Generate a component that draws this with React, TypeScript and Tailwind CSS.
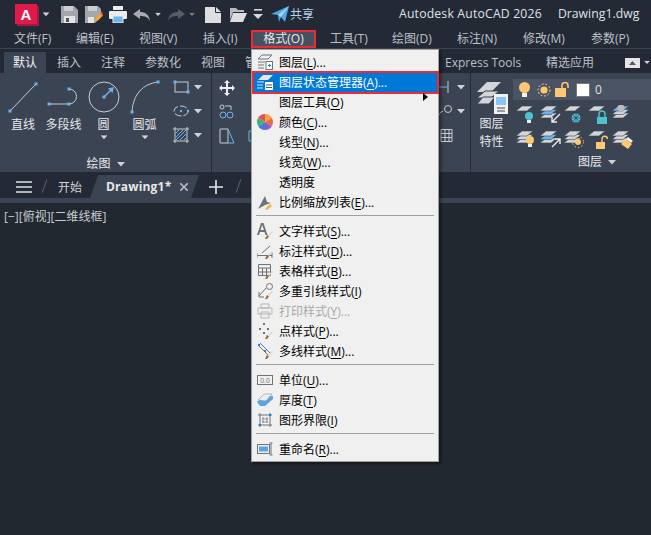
import React from "react";

const B = "#6cb4ee";
const G = "#c9ccd1";
const Y = "#fdc871";
const L = "#d3d5d8";
const FONT = "font-['Open_Sans','Noto_Sans_CJK_SC',sans-serif]";

const Caret = ({ c = "mx-auto" }: { c?: string }) => (
  <svg width="8" height="5" viewBox="0 0 8 5" className={c}><path d="M0 0h8L4 4.5z" fill="#cfd2d6" /></svg>
);

function Ico({ w = 18, h = 18, c = "", children }: { w?: number; h?: number; c?: string; children: React.ReactNode }) {
  return <svg width={w} height={h} viewBox={`0 0 ${w} ${h}`} className={`shrink-0 ${c}`}>{children}</svg>;
}

const Square = ({ x, y, f = B }: { x: number; y: number; f?: string }) => <rect x={x - 1.5} y={y - 1.5} width="3" height="3" fill={f} />;

function QuickBar() {
  return (
    <div className="flex h-[28px] items-center pt-[1px]">
      <div className="ml-[15px] mb-[1px] flex h-[20px] w-[22px] items-center justify-center bg-[#e01b4b] text-[15px] leading-none font-bold text-white shadow-[2px_2px_0_#a11c40] font-['Liberation_Sans',sans-serif]">A</div>
      <Caret c="ml-[5px] scale-90" />
      <Ico w={17} h={17} c="ml-[11px]"><path d="M0 0h13l4 4v13H0z" fill="#a3a6aa" /><rect x="3" y="0" width="9" height="5" fill="#cdced0" /><rect x="3" y="10" width="11" height="7" fill="#e4e4e4" /><rect x="5" y="12" width="3" height="4" fill="#555" /></Ico>
      <Ico w={18} h={17} c="ml-[7px]"><path d="M0 0h13l3 3v8l-6 6H0z" fill="#a3a6aa" /><rect x="3" y="0" width="9" height="5" fill="#cdced0" /><rect x="3" y="11" width="6" height="6" fill="#e4e4e4" /><path d="M9 16l1.5-4 5-5 2.5 2.5-5 5z" fill="#f2a33a" /><path d="M15 7l1.5-1.5L18 8l-1 1.5z" fill="#e84d5c" /></Ico>
      <Ico w={18} h={17} c="ml-[6px]"><rect x="4" y="0" width="10" height="4" fill="#ececec" /><rect x="0" y="5" width="18" height="8" rx="1" fill="#ececec" /><rect x="4" y="10" width="10" height="7" fill={B} stroke="#ececec" /></Ico>
      <Ico w={17} h={12} c="ml-[6px]"><path d="M0 5l7-5v3c5 0 9 2 10 9-2-4-5-5-10-5v3z" fill="#a8aaad" /></Ico>
      <Caret c="ml-[4px] scale-75" />
      <Ico w={17} h={12} c="ml-[6px]"><path d="M17 5l-7-5v3C5 3 1 5 0 12c2-4 5-5 10-5v3z" fill="#565c66" /></Ico>
      <Caret c="ml-[3px] scale-75 opacity-50" />
      <Ico w={16} h={17} c="ml-[9px]"><path d="M0 1h10l6 6v10H0z" fill="#dedede" /><path d="M11 1l5 5h-5z" fill="#dedede" /><path d="M10.5 0v6.5H16" fill="none" stroke="#232a35" /></Ico>
      <Ico w={18} h={15} c="ml-[8px]"><path d="M1 1h6l2 2h6v2H4l-3 8z" fill="#b9babc" /><path d="M4 6h14l-4 9H1z" fill="#dedede" /></Ico>
      <Ico w={10} h={11} c="ml-[6px]"><rect x="1" y="0" width="8" height="1.6" fill="#d7d8da" /><path d="M0 5h10l-5 5z" fill="#d7d8da" /></Ico>
      <Ico w={18} h={17} c="ml-[8px]"><path d="M0 8L18 0l-4 16-4-5-2 5-1-7z" fill="#4fa9e8" /><path d="M7 9l11-9-8 11z" fill="#a8d6f7" /></Ico>
      <span className="ml-[1px] text-[12px] text-[#b4d3ec]">共享</span>
      <span className="ml-[85px] text-[12.2px] tracking-[0.2px] text-[#dfe2e6]">Autodesk AutoCAD 2026</span>
      <span className="ml-[16px] text-[12.2px] tracking-[0.05px] text-[#dfe2e6]">Drawing1.dwg</span>
    </div>
  );
}

function MenuBar() {
  const items: [string, string][] = [
    ["文件(F)", "ml-[14px] w-[62px]"],
    ["编辑(E)", "w-[63px]"],
    ["视图(V)", "w-[64px]"],
    ["插入(I)", "w-[48px]"],
  ];
  const after: [string, string][] = [
    ["工具(T)", "ml-[14px] w-[62px]"],
    ["绘图(D)", "w-[65px]"],
    ["标注(N)", "w-[66px]"],
    ["修改(M)", "w-[68px]"],
    ["参数(P)", "w-[50px]"],
  ];
  return (
    <div className="flex h-[21px] items-center border-b border-[#3b4453] pt-[2px] text-[12px] text-[#bcc1c8]">
      {items.map(([t, c]) => <span key={t} className={c}>{t}</span>)}
      <span className="flex h-[18px] w-[65px] items-center justify-center border-2 border-[#ed2a36] bg-[#47505f] text-[#e6e8ea]">格式(O)</span>
      {after.map(([t, c]) => <span key={t} className={c}>{t}</span>)}
    </div>
  );
}

function RibbonTabs() {
  const tabs: [string, string][] = [
    ["插入", "ml-[11px] w-[44px]"],
    ["注释", "w-[44px]"],
    ["参数化", "w-[56px]"],
    ["视图", "w-[44px]"],
    ["管理", "w-[200px]"],
    ["Express Tools", "w-[101px]"],
    ["精选应用", "w-[79px]"],
  ];
  return (
    <div className="flex h-[24px] items-end text-[12px] text-[#bcc1c8]">
      <span className="ml-[4px] flex h-[21px] w-[42px] items-center justify-center bg-[#3b4453] pt-[1px] text-[#f0f1f3]">默认</span>
      {tabs.map(([t, c]) => <span key={t} className={`flex h-[21px] items-center whitespace-nowrap pt-[1px] ${c}`}>{t}</span>)}
      <span className="mb-[5px] flex h-[10px] w-[15px] items-center justify-center bg-[#e4e4e4]"><svg width="7" height="4"><path d="M0 4h7L3.5 0z" fill="#555" /></svg></span>
      <Caret c="mb-[8px] ml-[3px] scale-75" />
    </div>
  );
}

const BigTool = ({ w, label, caret, children }: { w: string; label: string; caret?: boolean; children: React.ReactNode }) => (
  <div className={`flex flex-col items-center ${w}`}>
    <div className="flex h-[36px] items-center justify-center">{children}</div>
    <span className="mt-[2px] text-[12px] leading-[16px] whitespace-nowrap text-[#e6e8ea]">{label}</span>
    {caret && <Caret c="mt-[2px] scale-90" />}
  </div>
);

function DrawPanel() {
  return (
    <div className="relative flex h-full w-[212px] shrink-0 flex-col border-r border-[#232a35]">
      <div className="flex h-[83px] items-start pt-[6px]">
        <BigTool w="w-[46px]" label="直线">
          <Ico w={32} h={32}><path d="M3 30L29 3" stroke={G} /><Square x={3} y={30} /><Square x={29} y={3} /></Ico>
        </BigTool>
        <BigTool w="w-[35px]" label="多段线">
          <Ico w={34} h={32}><path d="M2 23h20M22 8a7.5 7.5 0 010 15" stroke={G} fill="none" /><Square x={2} y={23} /><Square x={22} y={23} /><Square x={22} y={8} /></Ico>
        </BigTool>
        <BigTool w="w-[45px]" label="圆" caret>
          <Ico w={32} h={32}><circle cx="16" cy="16" r="15" stroke={G} fill="none" /><path d="M16 16l8-8" stroke={B} strokeWidth="1.5" /><Square x={16} y={16} /><path d="M26 6l-6 1.5 4.5 4.5z" fill={B} /></Ico>
        </BigTool>
        <BigTool w="w-[37px]" label="圆弧" caret>
          <Ico w={32} h={34}><path d="M3 32C4 14 14 4 29 2" stroke={G} fill="none" /><Square x={3} y={32} /><Square x={29} y={2} /></Ico>
        </BigTool>
        <div className="ml-[10px] flex flex-col gap-[8px]">
          <div className="flex items-center gap-[3px]">
            <Ico w={18} h={16}><rect x="2" y="3" width="13" height="10" stroke={G} fill="none" /><Square x={2} y={3} /><Square x={15} y={13} /></Ico><Caret c="" />
          </div>
          <div className="flex items-center gap-[3px]">
            <Ico w={18} h={16}><ellipse cx="8" cy="8" rx="7" ry="5" stroke={G} fill="none" strokeDasharray="7 2" /><rect x="7" y="7" width="2" height="2" fill={B} /><rect x="14" y="7" width="2" height="2" fill={B} /></Ico><Caret c="" />
          </div>
          <div className="flex items-center gap-[3px]">
            <Ico w={18} h={16}><path d="M0 2h16M0 14h16M2 0v16M14 0v16" stroke={G} /><path d="M3 6l3-3M3 10l7-7M3 13l10-10M7 13l6-6M11 13l2-2" stroke="#6cb4ee" /></Ico><Caret c="" />
          </div>
        </div>
      </div>
      <div className="flex h-[16px] items-center justify-center gap-[6px] text-[12px] text-[#e6e8ea]">绘图<Caret c="" /></div>
    </div>
  );
}

function ModifyPanel() {
  return (
    <div className="flex h-full w-[259px] shrink-0 border-r border-[#232a35] pt-[7px]">
      <div className="ml-[7px] flex flex-col gap-[8px]">
        <Ico w={16} h={16}><path d="M8 0l3 3H9v4h4V5l3 3-3 3V9H9v4h2l-3 3-3-3h2V9H3v2L0 8l3-3v2h4V3H5z" fill="#f0f0f0" /></Ico>
        <Ico w={16} h={16}><circle cx="4" cy="11" r="3" stroke={B} fill="none" /><circle cx="11" cy="11" r="3" stroke={B} fill="none" /><circle cx="3" cy="3" r="2" stroke={G} fill="none" /><path d="M6 2h6v4" stroke={G} fill="none" /></Ico>
        <Ico w={16} h={16}><path d="M1 1h8v14H1z" stroke={G} fill="none" /><path d="M9 1l6 14H9" stroke={B} fill="none" /></Ico>
      </div>
      <div className="ml-[13px] flex flex-col gap-[8px]">
        <Ico w={8} h={16}><path d="M6 2C3 5 3 11 6 14" stroke={G} fill="none" /></Ico>
        <Ico w={8} h={16}><path d="" /></Ico>
        <Ico w={8} h={16}><path d="M1 3h7M1 3v10h7" stroke={B} fill="none" /></Ico>
      </div>
      <div className="ml-auto mr-[5px] flex flex-col gap-[9px]">
        <div className="flex items-center gap-[4px]"><Ico w={16} h={15}><path d="M0 7h10" stroke={B} /><path d="M11 1v12" stroke={G} /></Ico><Caret c="" /></div>
        <div className="flex items-center gap-[4px]"><Ico w={16} h={15}><path d="M0 14c2-3 3-6 6-7" stroke={G} fill="none" /><circle cx="11" cy="5" r="3.5" stroke={G} fill="none" /></Ico><Caret c="" /></div>
        <div className="flex items-center gap-[4px]"><Ico w={16} h={15}><path d="M4 1.5h11v12H4zM4 5.5h11M4 9.5h11M8 1.5v12M12 1.5v12" stroke={G} fill="none" /></Ico></div>
      </div>
    </div>
  );
}

const MiniLayer = ({ first = L, second = L, n = 1, children }: { first?: string; second?: string; n?: number; children?: React.ReactNode }) => (
  <Ico w={22} h={20} c="">
    {Array.from({ length: n })
      .map((_, i) => n - 1 - i)
      .map((i) => (
        <path key={i} d={`M6 ${1 + i * 3.5}h11l-6 5H0z`} fill={i === 0 ? first : i === 1 ? second : L} stroke="#3b4453" strokeWidth="0.6" />
      ))}
    {children}
  </Ico>
);

function LayerPanel() {
  const row1 = [
    <MiniLayer key="a"><circle cx="13" cy="11" r="4" fill="#4fc1d0" /><rect x="11" y="15" width="4" height="3" fill="#eee" /></MiniLayer>,
    <MiniLayer key="b" n={3} second={B}><path d="M20 9l-8 8m0-5v5h5" stroke="#eee" strokeWidth="1.4" fill="none" /></MiniLayer>,
    <MiniLayer key="c"><circle cx="12" cy="13" r="4.5" fill="#4fc1d0" /><path d="M7 13h10M12 8v10M9 10l6 6M15 10l-6 6" stroke="#3b4453" strokeWidth="0.7" /></MiniLayer>,
    <MiniLayer key="d"><rect x="9" y="12" width="10" height="7" fill="#4fc1d0" /><path d="M11 12V9a3 3 0 016 0v3" stroke="#4fc1d0" strokeWidth="1.4" fill="none" /></MiniLayer>,
    <MiniLayer key="e" n={3} first={B}><circle cx="9" cy="3" r="3.5" fill="#b9bcc0" /></MiniLayer>,
  ];
  const row2 = [
    <MiniLayer key="a" n={3}><circle cx="14" cy="10" r="4" fill={Y} /><rect x="12" y="14" width="4" height="3" fill="#eee" /></MiniLayer>,
    <MiniLayer key="b" n={3} second={B}><path d="M12 17l8-8m-5 0h5v5" stroke="#eee" strokeWidth="1.4" fill="none" /></MiniLayer>,
    <MiniLayer key="c" n={3}><circle cx="14" cy="12" r="3" fill={Y} /><circle cx="14" cy="12" r="5.5" fill="none" stroke={Y} strokeDasharray="1.5 2" /></MiniLayer>,
    <MiniLayer key="d"><rect x="8" y="12" width="9" height="7" fill={Y} /><path d="M14 12V9a2.7 2.7 0 015.4 0" stroke={Y} strokeWidth="1.4" fill="none" /></MiniLayer>,
    <MiniLayer key="e" n={3}><path d="M9 14l5-5 6 5-4 5z" fill={Y} /><path d="M14 9l2-2 5 4-2 2z" fill="#eee" /></MiniLayer>,
  ];
  return (
    <div className="flex h-full min-w-0 flex-1">
      <div className="flex w-[41px] shrink-0 flex-col items-center pt-[6px]">
        <svg width="36" height="36" viewBox="0 0 36 36" className="ml-[3px] shrink-0">
          <path d="M12 3h14l-10 10H2z" fill="#d3d5d8" /><path d="M10 12l-8 7h14l8-7z" fill="#d3d5d8" stroke="#3b4453" /><path d="M8 18l-6 7h12l6-7z" fill="#d3d5d8" stroke="#3b4453" />
          <rect x="19" y="15" width="14" height="20" fill="#f1f1f1" /><rect x="21" y="18" width="10" height="8" fill="#8cc4f2" /><path d="M22 29h8M22 32h8" stroke="#444" />
        </svg>
        <span className="text-[12px] leading-[18px] text-[#e6e8ea]">图层</span>
        <span className="text-[12px] leading-[18px] text-[#e6e8ea]">特性</span>
      </div>
      <div className="min-w-0 flex-1">
        <div className="mt-[6px] ml-[1px] flex h-[21px] items-center bg-[#4a5464] pl-[5px]">
          <Ico w={13} h={15}><circle cx="6.5" cy="5.5" r="5.5" fill={Y} /><rect x="4" y="11" width="5" height="4" fill="#f1f1f1" /></Ico>
          <Ico w={14} h={14} c="ml-[6px]"><circle cx="7" cy="7" r="3.6" fill={Y} /><circle cx="7" cy="7" r="6" fill="none" stroke={Y} strokeDasharray="2 1.6" /></Ico>
          <Ico w={15} h={15} c="ml-[4px]"><rect x="0" y="6" width="11" height="9" fill={Y} /><path d="M7 6V3.5a3 3 0 016 0V6" stroke={Y} strokeWidth="1.6" fill="none" /></Ico>
          <div className="ml-[6px] h-[14px] w-[14px] border border-[#777] bg-white" />
          <span className="ml-[5px] text-[12px] text-[#dfe2e6]">0</span>
        </div>
        <div className="mt-[5px] ml-[4px] flex h-[20px] gap-[2px]">{row1}</div>
        <div className="mt-[5px] ml-[4px] flex h-[20px] gap-[2px]">{row2}</div>
        <div className="mt-[4px] ml-[66px] flex h-[16px] items-center gap-[6px] text-[12px] text-[#e6e8ea]">图层<Caret c="" /></div>
      </div>
    </div>
  );
}

function DocTabs() {
  return (
    <div className="flex h-[26px] items-end text-[12px]">
      <svg width="16" height="12" viewBox="0 0 16 12" className="mb-[5px] ml-[16px]"><path d="M0 1h16M0 6h16M0 11h16" stroke="#dfe2e6" strokeWidth="1.6" /></svg>
      <div className="mb-[5px] ml-[12px] h-[14px] w-px rotate-[20deg] bg-[#5a6270]" />
      <span className="mb-[1px] ml-[13px] text-[#cfd3d8]">开始</span>
      <div className="ml-[8px] flex h-[23px] w-[109px] items-center bg-[#3b4453] pt-[1px] pl-[16px] [clip-path:polygon(8px_0,100%_0,calc(100%-8px)_100%,0_100%)]">
        <span className="font-bold tracking-[0.2px] text-[#e6e8ea]">Drawing1*</span>
        <svg width="8" height="8" viewBox="0 0 8 8" className="ml-[9px]"><path d="M0 0l8 8M8 0L0 8" stroke="#aeb3ba" strokeWidth="1.8" /></svg>
      </div>
      <svg width="14" height="14" viewBox="0 0 14 14" className="mb-[4px] ml-[10px]"><path d="M7 0v14M0 7h14" stroke="#e6e8ea" strokeWidth="1.6" /></svg>
      <div className="mb-[5px] ml-[15px] h-[14px] w-px rotate-[20deg] bg-[#5a6270]" />
    </div>
  );
}

type Item = { t?: string; m?: string; e?: string; sub?: boolean; dis?: boolean; hot?: boolean; i?: React.ReactNode };

const CG = "#6f7276";
const Brush = () => <><path d="M11 12l4-4 1 1-4 4z" fill="#d8d8d8" /><path d="M8 16l2-4 2 1.500-2 2.500z" fill="#a0692f" /></>;

const items: (Item | "sep")[] = [
  { t: "图层(", m: "L", e: ")...", i: <><path d="M5 1h10l-4 4H1z" fill="none" stroke={CG} /><path d="M1 8h7M1 11h6M1 14h6" stroke={CG} /><rect x="9" y="7.500" width="6.500" height="8" fill="#fff" stroke={CG} /><path d="M11 11.500h3M12.500 10v3" stroke="#2a7fd0" /></> },
  { t: "图层状态管理器(", m: "A", e: ")...", hot: true, i: <><path d="M6 1h10l-5 5H1z" fill="#e4e8ee" /><path d="M0 8h7M0 11h6M0 14h6" stroke="#dce6f2" /><rect x="8" y="8" width="8" height="8" fill="#fff" /><path d="M9 11h6M9 13.500h6" stroke="#555" /></> },
  { t: "图层工具(", m: "O", e: ")", sub: true },
  { t: "颜色(", m: "C", e: ")...", i: <><path d="M8 8V0a8 8 0 016.9 4z" fill="#f2a33a" /><path d="M8 8l6.900-4a8 8 0 010 8z" fill="#f06a3c" /><path d="M8 8l6.900 4A8 8 0 018 16z" fill="#8e5bd0" /><path d="M8 8v8a8 8 0 01-6.900-4z" fill="#3f7fd8" /><path d="M8 8l-6.900 4a8 8 0 010-8z" fill="#3fb36b" /><path d="M8 8L1.100 4A8 8 0 018 0z" fill="#e84d5c" /></> },
  { t: "线型(", m: "N", e: ")..." },
  { t: "线宽(", m: "W", e: ")..." },
  { t: "透明度" },
  { t: "比例缩放列表(", m: "E", e: ")...", i: <><path d="M1 15L8 2l2 6 4 1-6 2z" fill={CG} /><path d="M8 15l5-5 2 2-5 4z" fill="#f0b04a" /></> },
  "sep",
  { t: "文字样式(", m: "S", e: ")...", i: <><path d="M0 12L4 0h2.500l4 12H8.500l-1-3H3l-1 3zM3.500 7h3.500L5.200 2z" fill={CG} /><Brush /></> },
  { t: "标注样式(", m: "D", e: ")...", i: <><path d="M0 10v5M0 12.500h15M15 10v5" stroke={CG} /><path d="M5 10l8-7" stroke={CG} /><Brush /></> },
  { t: "表格样式(", m: "B", e: ")...", i: <><path d="M1.500 1.500h12v11h-12zM1.500 5h12M1.500 9h12M5.500 5v8M9.500 5v8" stroke={CG} fill="none" /><Brush /></> },
  { t: "多重引线样式(", m: "I", e: ")", i: <><circle cx="12.500" cy="3.500" r="3" fill="none" stroke={CG} /><path d="M9 5l-7 8M2 9v5h5" stroke={CG} fill="none" /><Brush /></> },
  { t: "打印样式(", m: "Y", e: ")...", dis: true, i: <><path d="M4 1h8v4H4zM1 5h14v6H1zM4 9h8v6H4z" fill="none" stroke="#b5b5b5" /></> },
  { t: "点样式(", m: "P", e: ")...", i: <><rect x="6" y="0" width="2" height="2" fill={CG} /><rect x="2" y="5" width="2" height="2" fill={CG} /><rect x="10" y="5" width="2" height="2" fill={CG} /><rect x="6" y="9" width="2" height="2" fill={CG} /><Brush /></> },
  { t: "多线样式(", m: "M", e: ")...", i: <><path d="M1 2l10 10M3 0l10 10" stroke={CG} /><rect x="1" y="1" width="2" height="2" fill="#1583e0" /><rect x="7" y="7" width="2" height="2" fill="#1583e0" /><Brush /></> },
  "sep",
  { t: "单位(", m: "U", e: ")...", i: <><rect x="0.500" y="3.500" width="15" height="9" fill="none" stroke={CG} /><text x="8" y="11" textAnchor="middle" fontSize="7" fill={CG} fontFamily="Liberation Sans">0.0</text></> },
  { t: "厚度(", m: "T", e: ")", i: <><path d="M0 10l7-6h9v3l-8 7H3z" fill="#5aa5e0" /><path d="M1 8l6-6h8l-6 7z" fill="#ececec" stroke="#888" strokeWidth="0.5" /></> },
  { t: "图形界限(", m: "I", e: ")", i: <><path d="M3 1v14M13 1v14M1 3h14M1 13h14" stroke={CG} /><path d="M6 5v6M10 5v6M5 7h6M5 10h6" stroke={CG} strokeWidth="0.7" /><rect x="2" y="12" width="2" height="2" fill="#1583e0" /><rect x="12" y="2" width="2" height="2" fill="#1583e0" /></> },
  "sep",
  { t: "重命名(", m: "R", e: ")...", i: <><rect x="0.500" y="3.500" width="12" height="9" fill="none" stroke={CG} /><rect x="2" y="5.500" width="9" height="5" fill="#5aa5e0" /><path d="M14 2v12M12.500 2h3M12.500 14h3" stroke={CG} /></> },
];

function Menu() {
  return (
    <div className="absolute top-[49px] left-[251px] w-[188px] border border-[#a0a0a0] bg-[#f0f0f0] pt-[2px] pb-[2px] text-[12px] text-black shadow-[2px_2px_3px_rgba(0,0,0,0.45)]">
      {items.map((it, idx) => {
        if (it === "sep") {
          return <div key={idx} className="flex h-[9px] items-start pt-[3px]"><div className="mx-[4px] h-px w-full bg-[#a0a0a0]" /></div>;
        }
        return (
          <div key={idx} className={`relative flex h-[20px] items-center ${it.hot ? "bg-[#0078d7] text-white" : ""} ${it.dis ? "text-[#a8a8a8]" : ""}`}>
            {it.hot && <div className="absolute -top-[1px] -right-[1px] -bottom-[2px] left-0 border-2 border-[#ed2a36]" />}
            <span className="flex w-[27px] shrink-0 justify-center pr-[1px]">
              {it.i && <svg width="16" height="16" viewBox="0 0 16 16">{it.i}</svg>}
            </span>
            <span className="whitespace-nowrap pt-[1px]">
              {it.t}
              {it.m && <span className="underline underline-offset-2">{it.m}</span>}
              {it.e}
            </span>
            {it.sub && <svg width="5" height="8" viewBox="0 0 5 8" className="absolute top-[1px] right-[10px]"><path d="M0 0l5 4-5 4z" fill="#000" /></svg>}
          </div>
        );
      })}
    </div>
  );
}

export default function App() {
  return (
    <div className={`relative h-[535px] w-[651px] overflow-hidden bg-[#212830] ${FONT}`}>
      <div className="bg-[#232a35]">
        <QuickBar />
        <MenuBar />
        <RibbonTabs />
        <div className="flex h-[99px] bg-[#3b4453]">
          <DrawPanel />
          <ModifyPanel />
          <LayerPanel />
        </div>
        <DocTabs />
        <div className="h-[5px] bg-[#3b4453]" />
      </div>
      <div className="pt-[6px] pl-[4px] text-[12px] leading-[16px] text-[#c9ccd1]">[−][俯视][二维线框]</div>
      <Menu />
    </div>
  );
}
